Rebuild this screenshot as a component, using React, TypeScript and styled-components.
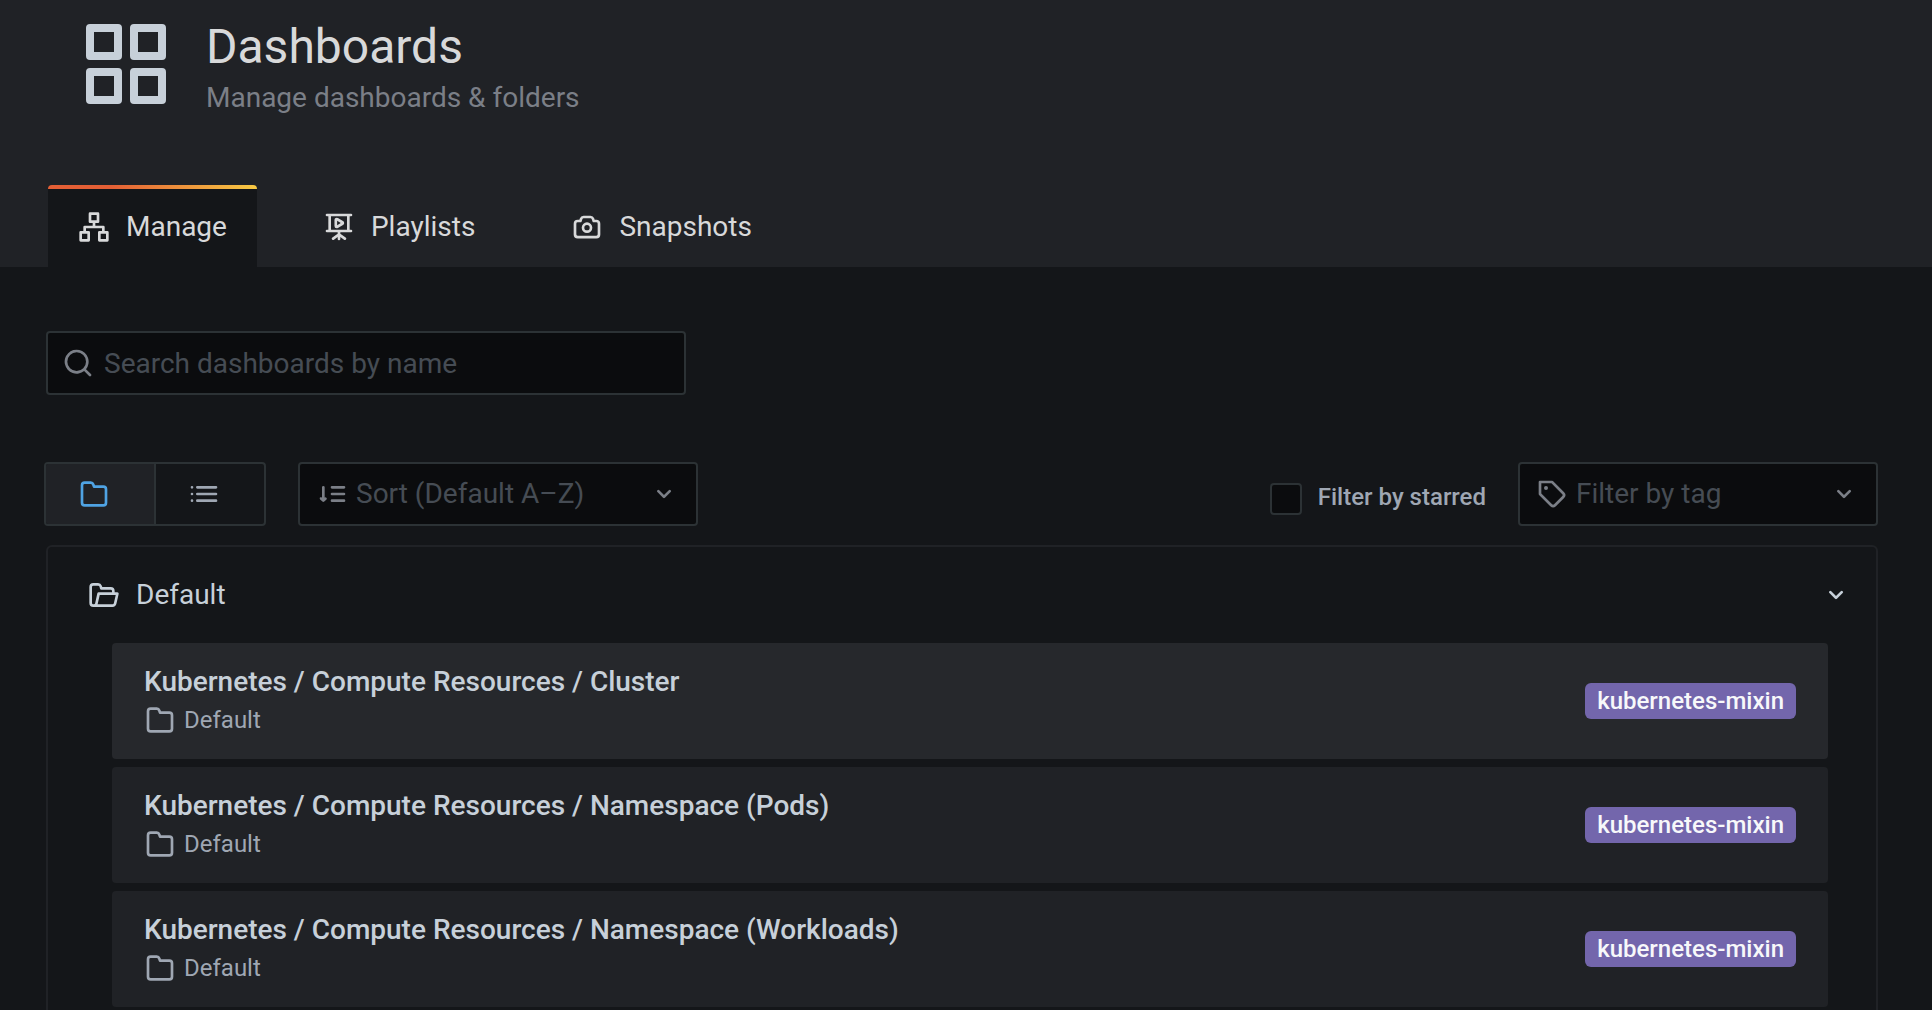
import React from "react";
import styled, { createGlobalStyle } from "styled-components";

const color = {
  body: "#141619",
  surface: "#202226",
  hover: "#26282c",
  field: "#0b0c0e",
  border: "#2c3235",
  heading: "#d8d9da",
  text: "#c7d0d9",
  weak: "#9fa7b3",
  faint: "#7b7f87",
  placeholder: "#464c54",
  active: "#4fa3e3",
  tag: "#7366ac",
};

const GlobalStyle = createGlobalStyle`
  *, *::before, *::after { box-sizing: border-box; }
  body {
    margin: 0;
    background: ${color.body};
    color: ${color.text};
    font-family: Roboto, "Liberation Sans", sans-serif;
    font-size: 28px;
    line-height: 42px;
    -webkit-font-smoothing: antialiased;
  }
  h1, h2, p, ul { margin: 0; padding: 0; }
  ul { list-style: none; }
  a { color: inherit; text-decoration: none; }
  button, input, select { font: inherit; color: inherit; margin: 0; }
`;

const paths = {
  apps: "M10,13H3a1,1,0,0,0-1,1v7a1,1,0,0,0,1,1h7a1,1,0,0,0,1-1V14A1,1,0,0,0,10,13ZM9,20H4V15H9ZM21,2H14a1,1,0,0,0-1,1v7a1,1,0,0,0,1,1h7a1,1,0,0,0,1-1V3A1,1,0,0,0,21,2ZM20,9H15V4h5Zm1,4H14a1,1,0,0,0-1,1v7a1,1,0,0,0,1,1h7a1,1,0,0,0,1-1V14A1,1,0,0,0,21,13Zm-1,7H15V15h5ZM10,2H3A1,1,0,0,0,2,3v7a1,1,0,0,0,1,1h7a1,1,0,0,0,1-1V3A1,1,0,0,0,10,2ZM9,9H4V4H9Z",
  sitemap: "M22,15H20V12a1,1,0,0,0-1-1H13V9h2a1,1,0,0,0,1-1V2a1,1,0,0,0-1-1H9A1,1,0,0,0,8,2V8A1,1,0,0,0,9,9h2v2H5a1,1,0,0,0-1,1v3H2a1,1,0,0,0-1,1v6a1,1,0,0,0,1,1H8a1,1,0,0,0,1-1V16a1,1,0,0,0-1-1H6V13H18v2H16a1,1,0,0,0-1,1v6a1,1,0,0,0,1,1h6a1,1,0,0,0,1-1V16A1,1,0,0,0,22,15ZM7,17v4H3V17ZM10,7V3h4V7ZM21,21H17V17h4Z",
  presentation: "M21,14H20V4h1a1,1,0,0,0,0-2H3A1,1,0,0,0,3,4H4V14H3a1,1,0,0,0,0,2h8v1.15l-4,2.67A1,1,0,0,0,7.7,21.66a1,1,0,0,0,.55-.17L11,19.55V21a1,1,0,0,0,2,0V19.55l2.75,1.94a1,1,0,0,0,.55.17,1,1,0,0,0,.7-1.84l-4-2.67V16h8a1,1,0,0,0,0-2Zm-3,0H6V4H18ZM10.4,12.9a1.6,1.6,0,0,0,.8-.2l3.8-2.2a1.7,1.7,0,0,0,0-3L11.200,5.300A1.700,1.700,0,0,0,8.600,6.800v4.400a1.700,1.700,0,0,0,1.800,1.700Zm.2-5.500L13.300,9,10.600,10.600Z",
  camera: "M19,6.5H17.72l-.32-1a3,3,0,0,0-2.84-2H9.44A3,3,0,0,0,6.6,5.55l-.32,1H5a3,3,0,0,0-3,3v8a3,3,0,0,0,3,3H19a3,3,0,0,0,3-3v-8A3,3,0,0,0,19,6.5Zm1,11a1,1,0,0,1-1,1H5a1,1,0,0,1-1-1v-8a1,1,0,0,1,1-1H7a1,1,0,0,0,1-.68l.54-1.64a1,1,0,0,1,.95-.68h5.12a1,1,0,0,1,.95.68l.54,1.64A1,1,0,0,0,17,8.5h2a1,1,0,0,1,1,1Zm-8-9a4,4,0,1,0,4,4A4,4,0,0,0,12,8.5Zm0,6a2,2,0,1,1,2-2A2,2,0,0,1,12,14.5Z",
  search: "M21.71,20.29,18,16.61A9,9,0,1,0,16.61,18l3.68,3.68a1,1,0,0,0,1.42,0A1,1,0,0,0,21.71,20.29ZM11,18a7,7,0,1,1,7-7A7,7,0,0,1,11,18Z",
  folder: "M19,5.5H12.72l-.32-1a3,3,0,0,0-2.84-2H5a3,3,0,0,0-3,3v13a3,3,0,0,0,3,3H19a3,3,0,0,0,3-3V8.5A3,3,0,0,0,19,5.5Zm1,13a1,1,0,0,1-1,1H5a1,1,0,0,1-1-1V5.5a1,1,0,0,1,1-1H9.56a1,1,0,0,1,.95.68l.54,1.64A1,1,0,0,0,12,7.5h7a1,1,0,0,1,1,1Z",
  folderOpen: "M22.78,10.37A1,1,0,0,0,22,10H20V9a3,3,0,0,0-3-3H10.72l-.32-1A3,3,0,0,0,7.56,3H4A3,3,0,0,0,1,6V18a3,3,0,0,0,3,3H18.4a3,3,0,0,0,2.92-2.35L23,11.22A1,1,0,0,0,22.78,10.37ZM5.37,18.22a1,1,0,0,1-1,.78H4a1,1,0,0,1-1-1V6A1,1,0,0,1,4,5H7.56a1,1,0,0,1,1,.68L9,7.32A1,1,0,0,0,10,8h7a1,1,0,0,1,1,1v1H8a1,1,0,0,0-1,.78Zm14,0a1,1,0,0,1-1,.78H7.21a1.42,1.42,0,0,0,.11-.35L8.8,12h12Z",
  list: "M3,6A1,1,0,1,0,3,8,1,1,0,0,0,3,6ZM3,11a1,1,0,1,0,0,2,1,1,0,0,0,0-2ZM3,16a1,1,0,1,0,0,2,1,1,0,0,0,0-2ZM7,8H21a1,1,0,0,0,0-2H7A1,1,0,0,0,7,8ZM21,11H7a1,1,0,0,0,0,2H21a1,1,0,0,0,0-2ZM21,16H7a1,1,0,0,0,0,2H21a1,1,0,0,0,0-2Z",
  sort: "M5.500,6a1,1,0,0,0-1,1v7.700a1,1,0,0,0-1.700.900,1,1,0,0,0,.300.500l1.700,1.600a1,1,0,0,0,1.400,0l1.700-1.600a1,1,0,0,0-1.400-1.400V7A1,1,0,0,0,5.500,6ZM12,8h9a1,1,0,0,0,0-2H12a1,1,0,0,0,0,2ZM21,11H12a1,1,0,0,0,0,2h9a1,1,0,0,0,0-2ZM21,16H12a1,1,0,0,0,0,2h9a1,1,0,0,0,0-2Z",
  tag: "M7.5,6A1.5,1.5,0,1,0,9,7.5,1.5,1.5,0,0,0,7.5,6Zm13.62,4.71L12.71,2.29A1,1,0,0,0,12,2H3A1,1,0,0,0,2,3v9a1,1,0,0,0,.29.71l8.42,8.41a3,3,0,0,0,4.24,0L21.12,15a3,3,0,0,0,0-4.24Zm-1.41,2.82h0l-6.18,6.17a1,1,0,0,1-1.41,0L4,11.59V4h7.59l8.12,8.12a1,1,0,0,1,.29.71A1,1,0,0,1,19.71,13.53Z",
  angleDown: "M17,9.17a1,1,0,0,0-1.41,0L12,12.71,8.46,9.17a1,1,0,0,0-1.41,0,1,1,0,0,0,0,1.42l4.24,4.24a1,1,0,0,0,1.42,0L17,10.59A1,1,0,0,0,17,9.17Z",
};

type IconName = keyof typeof paths;

const Svg = styled.svg<{ $size: number }>`
  display: block;
  flex: none;
  width: ${(p) => p.$size}px;
  height: ${(p) => p.$size}px;
  fill: currentColor;
`;

const Icon = ({ name, size = 32 }: { name: IconName; size?: number }) => (
  <Svg $size={size} viewBox="0 0 24 24" aria-hidden="true">
    <path d={paths[name]} fillRule="evenodd" />
  </Svg>
);

const Page = styled.div`
  display: flex;
  flex-direction: column;
  min-height: 100vh;
`;

const Header = styled.header`
  padding: 16px 48px 0;
  background: ${color.surface};
`;

const Brand = styled.div`
  display: flex;
  gap: 32px;
  padding-left: 30px;
  color: ${color.text};
`;

const Title = styled.h1`
  color: ${color.heading};
  font-size: 48px;
  font-weight: 400;
  line-height: 62px;
`;

const Subtitle = styled.p`
  color: ${color.faint};
  line-height: 40px;
`;

const Tabs = styled.nav`
  display: flex;
  gap: 36px;
  margin-top: 67px;
`;

const Tab = styled.a<{ $active?: boolean }>`
  display: flex;
  align-items: center;
  gap: 16px;
  height: 82px;
  padding: 2px 30px 0;
  border-radius: 4px 4px 0 0;
  color: ${color.heading};
  background: ${(p) =>
    p.$active
      ? `linear-gradient(to right, #e45f35 30%, #f7c843 99%) top / 100% 4px no-repeat, ${color.body}`
      : "transparent"};
`;

const Main = styled.main`
  display: flex;
  flex: 1;
  flex-direction: column;
  padding: 64px 54px 0 46px;
`;

const Field = styled.div<{ $width: number }>`
  position: relative;
  width: ${(p) => p.$width}px;
  color: ${color.faint};
`;

const Adornment = styled.span<{ $side: "left" | "right"; $inset: number }>`
  position: absolute;
  top: 16px;
  ${(p) => p.$side}: ${(p) => p.$inset}px;
  pointer-events: none;
`;

const SearchInput = styled.input`
  display: block;
  width: 100%;
  height: 64px;
  padding: 0 16px 0 56px;
  border: 2px solid ${color.border};
  border-radius: 4px;
  background: ${color.field};
  color: ${color.text};
  &::placeholder { color: ${color.placeholder}; opacity: 1; }
`;

const Select = styled.select`
  display: block;
  width: 100%;
  height: 64px;
  padding: 0 56px;
  border: 2px solid ${color.border};
  border-radius: 4px;
  appearance: none;
  background: ${color.field};
  color: ${color.placeholder};
`;

const Toolbar = styled.div`
  display: flex;
  justify-content: space-between;
  margin: 67px 0 19px -2px;
`;

const ToolGroup = styled.div`
  display: flex;
  gap: 32px;
`;

const Toggle = styled.div`
  display: flex;
  height: 64px;
  border: 2px solid ${color.border};
  border-radius: 4px;
  overflow: hidden;
`;

const ToggleButton = styled.button<{ $active?: boolean }>`
  display: flex;
  align-items: center;
  padding: 0 44px 0 32px;
  border: 0;
  background: ${(p) => (p.$active ? color.surface : "transparent")};
  color: ${(p) => (p.$active ? color.active : color.weak)};
  & + & { border-left: 2px solid ${color.border}; }
`;

const Starred = styled.label`
  display: flex;
  align-items: center;
  gap: 16px;
  padding-top: 10px;
  color: ${color.weak};
  font-size: 24px;
  font-weight: 500;
  line-height: 28px;
`;

const StarredText = styled.span`
  padding-bottom: 4px;
`;

const Checkbox = styled.input`
  width: 32px;
  height: 32px;
  border: 2px solid ${color.border};
  border-radius: 4px;
  appearance: none;
  background: ${color.field};
`;

const Panel = styled.section`
  flex: 1;
  padding: 0 48px 0 64px;
  border: 2px solid ${color.surface};
  border-bottom: 0;
  border-radius: 6px 6px 0 0;
`;

const FolderButton = styled.button`
  display: flex;
  align-items: center;
  gap: 16px;
  width: calc(100% + 48px);
  height: 96px;
  margin-left: -24px;
  padding: 0;
  border: 0;
  background: none;
  color: ${color.text};
  text-align: left;
`;

const FolderName = styled.span`
  flex: 1;
`;

const Cards = styled.ul`
  display: flex;
  flex-direction: column;
  gap: 8px;
`;

const Card = styled.li<{ $hover?: boolean }>`
  display: flex;
  align-items: center;
  justify-content: space-between;
  height: 116px;
  padding: 0 32px;
  border-radius: 4px;
  background: ${(p) => (p.$hover ? color.hover : color.surface)};
`;

const CardTitle = styled.a`
  display: block;
  font-weight: 500;
  line-height: 40px;
`;

const CardFolder = styled.div`
  display: flex;
  align-items: center;
  gap: 8px;
  padding-bottom: 2px;
  color: ${color.weak};
  font-size: 24px;
  line-height: 36px;
`;

const Tag = styled.a`
  padding: 0 12px;
  border-radius: 6px;
  background: ${color.tag};
  color: #f7f8fa;
  font-size: 24px;
  font-weight: 500;
  line-height: 36px;
`;

const dashboards = [
  "Kubernetes / Compute Resources / Cluster",
  "Kubernetes / Compute Resources / Namespace (Pods)",
  "Kubernetes / Compute Resources / Namespace (Workloads)",
];

export default function App() {
  return (
    <Page>
      <GlobalStyle />
      <Header>
        <Brand>
          <Icon name="apps" size={96} />
          <div>
            <Title>Dashboards</Title>
            <Subtitle>Manage dashboards &amp; folders</Subtitle>
          </div>
        </Brand>
        <Tabs aria-label="Sections">
          <Tab href="#manage" $active aria-current="page">
            <Icon name="sitemap" />
            Manage
          </Tab>
          <Tab href="#playlists">
            <Icon name="presentation" />
            Playlists
          </Tab>
          <Tab href="#snapshots">
            <Icon name="camera" />
            Snapshots
          </Tab>
        </Tabs>
      </Header>
      <Main>
        <Field $width={640}>
          <SearchInput
            type="text"
            placeholder="Search dashboards by name"
            aria-label="Search dashboards by name"
          />
          <Adornment $side="left" $inset={16}>
            <Icon name="search" />
          </Adornment>
        </Field>
        <Toolbar>
          <ToolGroup>
            <Toggle role="group" aria-label="Layout">
              <ToggleButton type="button" $active aria-label="View by folders">
                <Icon name="folder" />
              </ToggleButton>
              <ToggleButton type="button" aria-label="View as list">
                <Icon name="list" />
              </ToggleButton>
            </Toggle>
            <Field $width={400}>
              <Select aria-label="Sort">
                <option>Sort (Default A–Z)</option>
              </Select>
              <Adornment $side="left" $inset={18}>
                <Icon name="sort" />
              </Adornment>
              <Adornment $side="right" $inset={18}>
                <Icon name="angleDown" />
              </Adornment>
            </Field>
          </ToolGroup>
          <ToolGroup>
            <Starred htmlFor="starred">
              <Checkbox type="checkbox" id="starred" />
              <StarredText>Filter by starred</StarredText>
            </Starred>
            <Field $width={360}>
              <Select aria-label="Filter by tag">
                <option>Filter by tag</option>
              </Select>
              <Adornment $side="left" $inset={18}>
                <Icon name="tag" />
              </Adornment>
              <Adornment $side="right" $inset={18}>
                <Icon name="angleDown" />
              </Adornment>
            </Field>
          </ToolGroup>
        </Toolbar>
        <Panel>
          <FolderButton type="button" aria-expanded="true">
            <Icon name="folderOpen" />
            <FolderName>Default</FolderName>
            <Icon name="angleDown" />
          </FolderButton>
          <Cards>
            {dashboards.map((title, i) => (
              <Card key={title} $hover={i === 0}>
                <div>
                  <CardTitle href="#dashboard">{title}</CardTitle>
                  <CardFolder>
                    <Icon name="folder" />
                    Default
                  </CardFolder>
                </div>
                <Tag href="#tag">kubernetes-mixin</Tag>
              </Card>
            ))}
          </Cards>
        </Panel>
      </Main>
    </Page>
  );
}
